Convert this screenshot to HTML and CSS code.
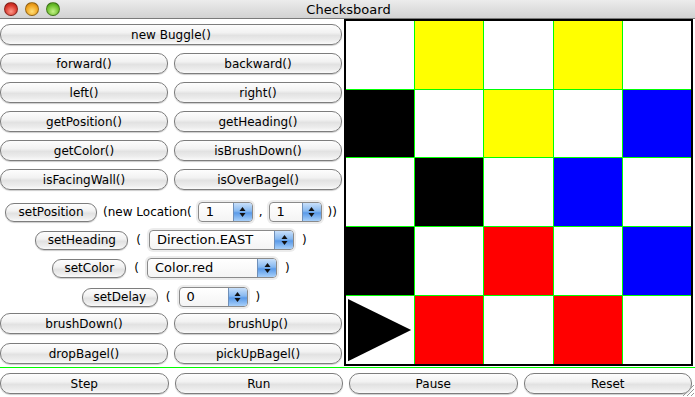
FILE: index.html
```html
<!DOCTYPE html>
<html lang="en">
<head>
  <meta charset="UTF-8" />
  <title>Checksboard</title>
  <link rel="stylesheet" href="styles.css">
</head>
<body>
  <div class="window">
    <div class="titlebar">
      <div class="lights">
        <span class="light red"></span>
        <span class="light orange"></span>
        <span class="light green"></span>
      </div>
      <div class="title">Checksboard</div>
    </div>

    <div class="main">
      <div class="controls">
        <div class="row single"><button class="btn">new Buggle()</button></div>
        <div class="row pair"><button class="btn">forward()</button><button class="btn">backward()</button></div>
        <div class="row pair"><button class="btn">left()</button><button class="btn">right()</button></div>
        <div class="row pair"><button class="btn">getPosition()</button><button class="btn">getHeading()</button></div>
        <div class="row pair"><button class="btn">getColor()</button><button class="btn">isBrushDown()</button></div>
        <div class="row pair"><button class="btn">isFacingWall()</button><button class="btn">isOverBagel()</button></div>

        <div class="line pos">
          <button class="btn small w92">setPosition</button>
          <span class="txt">(new Location(</span>
          <div class="combo w55"><span class="val">1</span><span class="arrows"><svg width="7" height="12" viewBox="0 0 7 12"><polygon points="3.5,1 6.5,5 0.5,5" /><polygon points="0.5,7 6.5,7 3.5,11" /></svg></span></div>
          <span class="txt">,</span>
          <div class="combo w53"><span class="val">1</span><span class="arrows"><svg width="7" height="12" viewBox="0 0 7 12"><polygon points="3.5,1 6.5,5 0.5,5" /><polygon points="0.5,7 6.5,7 3.5,11" /></svg></span></div>
          <span class="txt">))</span>
        </div>
        <div class="line">
          <button class="btn small w93">setHeading</button>
          <span class="txt">(</span>
          <div class="combo w145"><span class="val">Direction.EAST</span><span class="arrows"><svg width="7" height="12" viewBox="0 0 7 12"><polygon points="3.5,1 6.5,5 0.5,5" /><polygon points="0.5,7 6.5,7 3.5,11" /></svg></span></div>
          <span class="txt">)</span>
        </div>
        <div class="line">
          <button class="btn small w74">setColor</button>
          <span class="txt">(</span>
          <div class="combo w130"><span class="val">Color.red</span><span class="arrows"><svg width="7" height="12" viewBox="0 0 7 12"><polygon points="3.5,1 6.5,5 0.5,5" /><polygon points="0.5,7 6.5,7 3.5,11" /></svg></span></div>
          <span class="txt">)</span>
        </div>
        <div class="line delay">
          <button class="btn small w76">setDelay</button>
          <span class="txt">(</span>
          <div class="combo w69"><span class="val">0</span><span class="arrows"><svg width="7" height="12" viewBox="0 0 7 12"><polygon points="3.5,1 6.5,5 0.5,5" /><polygon points="0.5,7 6.5,7 3.5,11" /></svg></span></div>
          <span class="txt">)</span>
        </div>

        <div class="row pair brush"><button class="btn">brushDown()</button><button class="btn">brushUp()</button></div>
        <div class="row pair last"><button class="btn">dropBagel()</button><button class="btn">pickUpBagel()</button></div>
      </div>

      <div class="board">
        <div class="cell"></div><div class="cell yellow"></div><div class="cell"></div><div class="cell yellow"></div><div class="cell"></div>
        <div class="cell black"></div><div class="cell"></div><div class="cell yellow"></div><div class="cell"></div><div class="cell blue"></div>
        <div class="cell"></div><div class="cell black"></div><div class="cell"></div><div class="cell blue"></div><div class="cell"></div>
        <div class="cell black"></div><div class="cell"></div><div class="cell red"></div><div class="cell"></div><div class="cell blue"></div>
        <div class="cell buggle"><svg viewBox="0 0 68 68" preserveAspectRatio="none"><polygon points="2,3 65,34 2,65" /></svg></div><div class="cell red"></div><div class="cell"></div><div class="cell red"></div><div class="cell"></div>
      </div>
    </div>

    <div class="divider"></div>

    <div class="bottom">
      <button class="btn">Step</button>
      <button class="btn">Run</button>
      <button class="btn">Pause</button>
      <button class="btn">Reset</button>
    </div>

    <svg class="grip" width="14" height="14" viewBox="0 0 14 14">
      <line x1="13" y1="2" x2="2" y2="13" />
      <line x1="13" y1="6" x2="6" y2="13" />
      <line x1="13" y1="10" x2="10" y2="13" />
    </svg>
  </div>
</body>
</html>
```

FILE: styles.css
```css
body {
  margin: 0;
  font-family: 'DejaVu Sans', 'Lucida Grande', sans-serif;
  font-size: 12px;
  color: #000;
  background: #fff;
}
.window {
  position: relative;
  width: 695px;
  height: 397px;
  overflow: hidden;
  background: #fff;
}
.titlebar {
  height: 18px;
  border-bottom: 1px solid #7a7a7a;
  background: linear-gradient(#ececec, #d2d2d2);
  display: flex;
  align-items: center;
}
.lights {
  display: flex;
  gap: 7px;
  padding-left: 4px;
}
.light {
  width: 14px;
  height: 14px;
  border-radius: 50%;
  box-sizing: border-box;
  border: 1px solid rgba(0, 0, 0, 0.35);
}
.red { background: radial-gradient(circle at 50% 70%, #ff9a8a, #d8352a 60%, #a91e17); }
.orange { background: radial-gradient(circle at 50% 70%, #ffe07a, #f0a21c 60%, #c07710); }
.green { background: radial-gradient(circle at 50% 70%, #c6f28a, #6bbf2a 60%, #3f8a17); }
.title {
  flex: 1;
  text-align: center;
  font-size: 13px;
  margin-right: 58px;
}

.main {
  display: flex;
  height: 348px;
}
.controls {
  width: 344px;
  padding-top: 5px;
  box-sizing: border-box;
  display: flex;
  flex-direction: column;
}
.row { height: 21px; margin-bottom: 8px; flex: none; }
.single { width: 342px; display: flex; }
.single .btn { flex: 1; }
.pair {
  width: 342px;
  display: grid;
  grid-template-columns: 1fr 1fr;
  gap: 6px;
}
.row.brush { margin-bottom: 9px; }
.row.last { margin-bottom: 0; }

.btn {
  height: 21px;
  padding: 0;
  font-family: inherit;
  font-size: 12px;
  color: #000;
  border: 1px solid #7d7d7d;
  border-radius: 10px;
  background: linear-gradient(#fdfdfd 0%, #f2f2f2 40%, #e2e2e2 55%, #ececec 80%, #fafafa 100%);
  box-shadow: 0 1px 1px rgba(0, 0, 0, 0.2);
}
.btn.small { height: 19px; border-radius: 9px; }
.w92 { width: 92px; }
.w93 { width: 93px; }
.w74 { width: 74px; }
.w76 { width: 76px; }

.line {
  height: 22px;
  flex: none;
  margin-bottom: 6px;
  display: flex;
  align-items: center;
  justify-content: center;
  gap: 8px;
  padding-right: 2px;
}
.line.pos { margin-top: 3px; gap: 6px; }
.line.delay { margin-top: 1px; margin-bottom: 5px; }
.txt { white-space: nowrap; }

.combo {
  height: 20px;
  box-sizing: border-box;
  border: 1px solid #8a8a8a;
  border-radius: 4px;
  background: linear-gradient(#fff, #f4f4f4);
  display: flex;
  overflow: hidden;
  box-shadow: 0 0 0 2px #ececec;
}
.combo .val { flex: 1; padding-left: 7px; line-height: 18px; font-size: 13px; }
.combo .arrows {
  width: 18px;
  border-left: 1px solid #6f8fb8;
  background: linear-gradient(#c9e0fa 0%, #86b8f0 45%, #5a9ae8 55%, #a8d0fa 100%);
  display: flex;
  align-items: center;
  justify-content: center;
}
.combo .arrows polygon { fill: #111; }
.w55 { width: 55px; }
.w53 { width: 53px; }
.w145 { width: 145px; }
.w130 { width: 130px; }
.w69 { width: 69px; }

.board {
  width: 349px;
  height: 347px;
  box-sizing: border-box;
  border: 2px solid #000;
  display: grid;
  grid-template-columns: repeat(5, 1fr);
  grid-template-rows: repeat(5, 1fr);
  gap: 1px;
  background: #0f0;
}
.cell { background: #fff; }
.cell.yellow { background: #ff0; }
.cell.black { background: #000; }
.cell.blue { background: #00f; }
.cell.red { background: #f00; }
.buggle svg { width: 100%; height: 100%; display: block; }
.buggle polygon { fill: #000; }

.divider { height: 1px; background: #0f0; }
.bottom {
  width: 692px;
  padding-top: 5px;
  display: grid;
  grid-template-columns: repeat(4, 1fr);
  gap: 6px;
}
.grip {
  position: absolute;
  right: 0;
  bottom: 0;
}
.grip line { stroke: #999; stroke-width: 1; }
```
